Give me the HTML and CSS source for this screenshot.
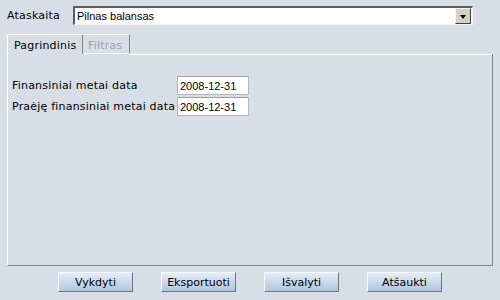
FILE: index.html
```html
<!DOCTYPE html>
<html lang="lt">
<head>
    <meta charset="UTF-8">
    <title>Ataskaita</title>
    <link rel="stylesheet" href="styles.css">
</head>
<body>
    <div class="report-row">
        <span class="report-label">Ataskaita</span>
        <div class="select-box">
            <span class="select-text">Pilnas balansas</span>
            <span class="select-btn"><span class="arrow"></span></span>
        </div>
    </div>

    <div class="tabs">
        <div class="tab active">Pagrindinis</div>
        <div class="tab disabled">Filtras</div>
    </div>

    <div class="panel">
        <div class="fields">
            <label class="field-label">Finansiniai metai data</label>
            <input class="date-input" type="text" value="2008-12-31">
            <label class="field-label">Praėję finansiniai metai data</label>
            <input class="date-input" type="text" value="2008-12-31">
        </div>
    </div>

    <div class="button-row">
        <button class="btn">Vykdyti</button>
        <button class="btn">Eksportuoti</button>
        <button class="btn">Išvalyti</button>
        <button class="btn">Atšaukti</button>
    </div>
</body>
</html>
```

FILE: styles.css
```css
* {
    margin: 0;
    padding: 0;
    box-sizing: border-box;
}

body {
    width: 500px;
    height: 300px;
    background: #d8dee6;
    font-family: 'DejaVu Sans', sans-serif;
    font-size: 11px;
    color: #000;
    overflow: hidden;
}

.report-row {
    display: flex;
    align-items: center;
    padding: 6px 0 0 7px;
}

.report-label {
    width: 66px;
    letter-spacing: 0.2px;
}

.select-box {
    width: 400px;
    height: 19px;
    display: flex;
    align-items: center;
    background: #fff;
    border-top: 2px solid #5c5c5c;
    border-left: 2px solid #5c5c5c;
    border-right: 1px solid #f4f4f4;
    border-bottom: 1px solid #f4f4f4;
}

.select-text {
    flex: 1;
    padding-left: 2px;
    font-family: 'Liberation Sans', sans-serif;
}

.select-btn {
    width: 16px;
    height: 16px;
    margin-right: 1px;
    background: #d4d0c8;
    border-top: 1px solid #f4f4f4;
    border-left: 1px solid #f4f4f4;
    border-right: 1px solid #404040;
    border-bottom: 1px solid #404040;
    display: flex;
    align-items: center;
    justify-content: center;
}

.arrow {
    width: 0;
    height: 0;
    border-left: 3px solid transparent;
    border-right: 3px solid transparent;
    border-top: 4px solid #000;
    margin-top: 1px;
}

.tabs {
    display: flex;
    padding-left: 7px;
    margin-top: 9px;
    height: 20px;
}

.tab {
    height: 20px;
    padding: 4px 0 0 6px;
    border-top: 1px solid #fff;
    border-left: 1px solid #fff;
    border-right: 1px solid #7d8188;
    letter-spacing: 0.2px;
    white-space: nowrap;
}

.tab.active {
    width: 76px;
}

.tab.disabled {
    width: 47px;
    padding-left: 5px;
    color: #a0a4aa;
    border-left: none;
    border-bottom: 1px solid #fff;
}

.panel {
    width: 486px;
    height: 212px;
    margin-left: 7px;
    border-left: 1px solid #fff;
    border-right: 1px solid #7d8188;
    border-bottom: 1px solid #7d8188;
}

.panel::before {
    content: "";
    display: block;
    margin-left: 122px;
    border-top: 1px solid #fff;
}

.fields {
    display: grid;
    grid-template-columns: 165px 72px;
    row-gap: 2px;
    align-items: center;
    padding: 21px 0 0 4px;
}

.field-label {
    letter-spacing: 0.2px;
    white-space: nowrap;
}

.date-input {
    width: 72px;
    height: 19px;
    border: 1px solid #b4b8be;
    border-top-color: #9ca0a6;
    background: #fff;
    font-family: 'Liberation Sans', sans-serif;
    font-size: 11px;
    padding: 0 2px;
    outline: none;
}

.button-row {
    display: flex;
    gap: 28px;
    padding: 6px 0 0 58px;
}

.btn {
    width: 75px;
    height: 20px;
    font-family: 'DejaVu Sans', sans-serif;
    font-size: 11px;
    color: #000;
    background: linear-gradient(#e6eef8, #c6d6ea 55%, #b3c7e0);
    border-top: 1px solid #f4f7fb;
    border-left: 1px solid #f4f7fb;
    border-right: 1px solid #6d7580;
    border-bottom: 1px solid #6d7580;
}
```
